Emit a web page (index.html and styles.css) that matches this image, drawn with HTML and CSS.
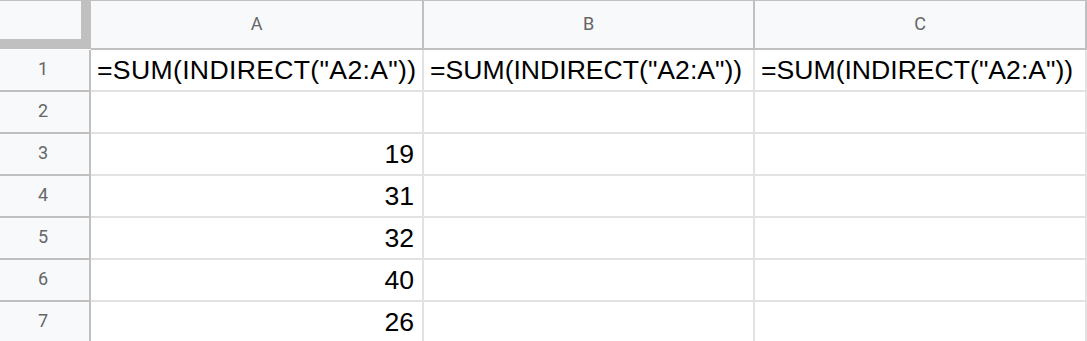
FILE: index.html
```html
<!DOCTYPE html>
<html lang="en">
<head>
  <meta charset="UTF-8" />
  <title>Sheet1</title>
  <link rel="stylesheet" href="styles.css">
</head>
<body>
  <div class="sheet">
    <div class="corner"><div class="corner-box"></div></div>
    <div class="col-head">A</div>
    <div class="col-head">B</div>
    <div class="col-head">C</div>

    <div class="row-head">1</div>
    <div class="cell spread">=SUM(INDIRECT("A2:A"))</div>
    <div class="cell">=SUM(INDIRECT("A2:A"))</div>
    <div class="cell">=SUM(INDIRECT("A2:A"))</div>

    <div class="row-head">2</div>
    <div class="cell"></div>
    <div class="cell"></div>
    <div class="cell"></div>

    <div class="row-head">3</div>
    <div class="cell num">19</div>
    <div class="cell"></div>
    <div class="cell"></div>

    <div class="row-head">4</div>
    <div class="cell num">31</div>
    <div class="cell"></div>
    <div class="cell"></div>

    <div class="row-head">5</div>
    <div class="cell num">32</div>
    <div class="cell"></div>
    <div class="cell"></div>

    <div class="row-head">6</div>
    <div class="cell num">40</div>
    <div class="cell"></div>
    <div class="cell"></div>

    <div class="row-head">7</div>
    <div class="cell num">26</div>
    <div class="cell"></div>
    <div class="cell"></div>
  </div>
</body>
</html>
```

FILE: styles.css
```css
body {
  margin: 0;
  background-color: #fff;
  overflow: hidden;
}
.sheet {
  display: grid;
  grid-template-columns: 91px 333px 331px 332px;
  grid-template-rows: 49px;
  grid-auto-rows: 42px;
  border-top: 1px solid #c0c0c0;
}
.sheet > div {
  box-sizing: border-box;
  border-right: 2px solid #e2e2e2;
  border-bottom: 2px solid #e2e2e2;
}
/* frozen corner with the thick drag bars */
.corner {
  margin-top: -1px;
  height: 49px;
  background-color: #c0c0c0;
  border-color: #c0c0c0 !important;
}
.corner-box {
  width: 81px;
  height: 38px;
  margin-top: 1px;
  background-color: #f8f9fa;
}
.col-head, .row-head {
  background-color: #f8f9fa;
  border-color: #c0c0c0 !important;
  font-family: Roboto, "Liberation Sans", sans-serif;
  font-size: 18px;
  color: #666;
  display: flex;
  align-items: center;
  justify-content: center;
}
.col-head {
  padding-bottom: 2px;
}
.row-head {
  padding-right: 3px;
  padding-bottom: 4px;
}
.cell {
  font-family: "Liberation Sans", Arial, sans-serif;
  font-size: 26.6px;
  color: #000;
  line-height: 40px;
  padding-left: 6px;
  white-space: nowrap;
}
.cell.spread {
  letter-spacing: 0.33px;
}
.cell.num {
  text-align: right;
  padding-right: 8px;
}
```
